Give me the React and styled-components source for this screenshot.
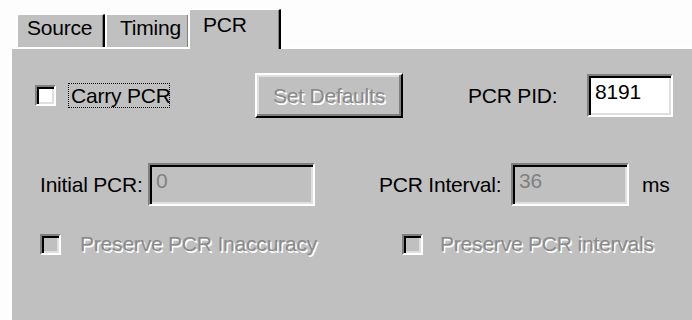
import { createGlobalStyle, styled } from "styled-components";

const GlobalStyle = createGlobalStyle`
  html, body {
    margin: 0;
    padding: 0;
    background: #fdfdfd;
  }
  body {
    font-family: "Liberation Sans", Arial, sans-serif;
    font-size: 21px;
    letter-spacing: -0.2px;
    color: #000;
  }
`;

export default function App() {
  return (
    <Window>
      <GlobalStyle />
      <TabStrip>
        <Tab $width={89} $pad={9}>Source</Tab>
        <Tab $width={85} $pad={13}>Timing</Tab>
        <Tab $active $width={93} $pad={13}>PCR</Tab>
      </TabStrip>
      <Panel>
        <Row $top={24} $height={45}>
          <CheckBox $left={23} $on />
          <FocusLabel $left={12}>Carry PCR</FocusLabel>
          <Button $left={85} disabled>Set Defaults</Button>
          <Label $left={65} $width={119}>PCR PID:</Label>
          <Field $width={86} defaultValue="8191" />
        </Row>
        <Row $top={45} $height={43}>
          <Label $left={28} $width={108}>Initial PCR:</Label>
          <Field $width={167} disabled defaultValue="0" />
          <Label $left={64} $width={132}>PCR Interval:</Label>
          <Field $width={118} disabled defaultValue="36" />
          <Label $left={13}>ms</Label>
        </Row>
        <Row $top={27} $height={22}>
          <CheckBox $left={28} />
          <Label $left={19} $width={322} $off>Preserve PCR Inaccuracy</Label>
          <CheckBox />
          <Label $left={17} $off>Preserve PCR intervals</Label>
        </Row>
      </Panel>
    </Window>
  );
}

const Window = styled.div`
  width: 692px;
  height: 320px;
  display: flex;
  flex-direction: column;
  overflow: hidden;
`;

const TabStrip = styled.div`
  display: flex;
  align-items: flex-end;
  height: 47px;
  padding-left: 16px;
  flex-shrink: 0;
`;

const Tab = styled.div`
  box-sizing: border-box;
  position: relative;
  width: ${(p) => p.$width}px;
  height: ${(p) => (p.$active ? 41 : 34)}px;
  margin-left: ${(p) => (p.$active ? -2 : 0)}px;
  margin-bottom: ${(p) => (p.$active ? -2 : 0)}px;
  z-index: ${(p) => (p.$active ? 1 : 0)};
  padding: ${(p) => (p.$active ? 3 : 1)}px 0 0 ${(p) => p.$pad}px;
  background: #c0c0c0;
  border-top: 2px solid #fff;
  border-left: 2px solid #fff;
  border-right: 2px solid #000;
  border-radius: 3px 3px 0 0;
  box-shadow: inset -1px 0 0 #808080;
  line-height: 24px;
  white-space: nowrap;
`;

const Panel = styled.div`
  flex: 1;
  margin-left: 10px;
  background: #c0c0c0;
  border-top: 2px solid #fff;
  border-left: 2px solid #fff;
`;

const Row = styled.div`
  display: flex;
  align-items: center;
  margin-top: ${(p) => p.$top}px;
  height: ${(p) => p.$height}px;
`;

const CheckBox = styled.div`
  box-sizing: border-box;
  flex-shrink: 0;
  width: 21px;
  height: 21px;
  margin-left: ${(p) => p.$left || 0}px;
  background: ${(p) => (p.$on ? "#fff" : "#c0c0c0")};
  border: 2px solid;
  border-color: #808080 #fff #fff #808080;
  box-shadow: inset 2px 2px 0 #000, inset -2px -2px 0 #dfdfdf;
`;

const FocusLabel = styled.div`
  box-sizing: border-box;
  width: 102px;
  height: 25px;
  margin-left: ${(p) => p.$left}px;
  padding: 0 2px;
  border: 1px dotted #000;
  line-height: 23px;
  white-space: nowrap;
`;

const Label = styled.div`
  flex-shrink: 0;
  margin-left: ${(p) => p.$left || 0}px;
  width: ${(p) => (p.$width ? `${p.$width}px` : "auto")};
  color: ${(p) => (p.$off ? "#8a8a8a" : "#000")};
  text-shadow: ${(p) => (p.$off ? "1.5px 1.5px 0 #fff" : "none")};
  white-space: nowrap;
`;

const Button = styled.button`
  box-sizing: border-box;
  width: 148px;
  height: 45px;
  margin-left: ${(p) => p.$left}px;
  padding: 0;
  background: #c0c0c0;
  font: inherit;
  letter-spacing: inherit;
  color: #8a8a8a;
  text-shadow: 1.5px 1.5px 0 #fff;
  border: 2px solid;
  border-color: #fff #000 #000 #fff;
  box-shadow: inset -2px -2px 0 #808080, inset 2px 2px 0 #dfdfdf;
`;

const Field = styled.input`
  box-sizing: border-box;
  width: ${(p) => p.$width}px;
  height: 43px;
  padding: 0 2px 8px 6px;
  font: inherit;
  letter-spacing: inherit;
  color: #000;
  background: #fff;
  border: 2px solid;
  border-color: #808080 #fff #fff #808080;
  box-shadow: inset 2px 2px 0 #000, inset -2px -2px 0 #dfdfdf;
  outline: none;
  &:disabled {
    background: #c0c0c0;
    color: #808080;
    -webkit-text-fill-color: #808080;
  }
`;
